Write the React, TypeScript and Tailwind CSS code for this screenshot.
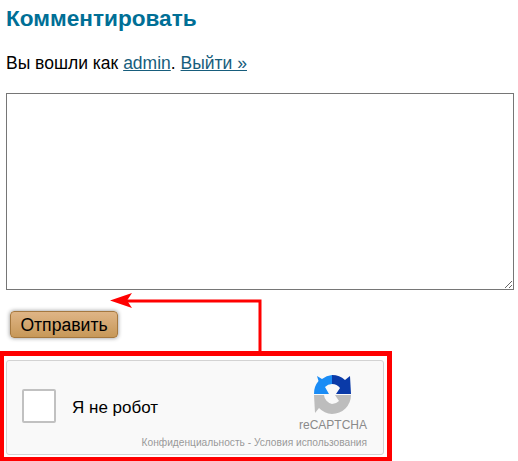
export default function App() {
  return (
    <div className="relative h-[461px] w-[518px] overflow-hidden bg-white font-['Liberation_Sans',Arial,sans-serif] text-black">
      <div className="px-[6px]">
        <h3 className="pt-[6px] text-[22.6px] leading-[26px] font-bold text-[#006f96]">Комментировать</h3>
        <p className="mt-[18px] text-[17.5px] leading-[26px]">
          Вы вошли как <a href="#" className="text-[#175d7c] underline">admin</a>.{" "}
          <a href="#" className="text-[#175d7c] underline">Выйти »</a>
        </p>
        <textarea className="mt-[17px] block h-[197px] w-[508px] border border-[#767676] bg-white" />
        <button className="mt-[21px] ml-[4px] block h-[27px] w-[108px] rounded-[4px] border border-[#a5783f] bg-gradient-to-b from-[#dfb586] to-[#c79858] text-[17.6px] leading-[24px] text-black shadow-[0_0_4px_rgba(0,0,0,0.45)]">
          Отправить
        </button>
      </div>

      <div className="mt-[13px] h-[110px] w-[392px] border-[5px] border-b-4 border-l-4 border-[#ff0000] pt-[4px] pl-[2px]">
        <div className="flex h-[95px] w-[378px] flex-col rounded-[3px] border border-[#d3d3d3] bg-[#f9f9f9]">
          <div className="flex h-[75px] items-start">
            <div className="mt-[28px] ml-[15px] h-[34px] w-[34px] rounded-[2px] border-2 border-[#c1c1c1] bg-white" />
            <span className="mt-[37px] ml-[16px] text-[17px] leading-[20px]">Я не робот</span>
            <div className="ml-auto flex w-[100px] flex-col items-center">
              <svg viewBox="0 0 48 48" className="mt-[9px] h-[48px] w-[48px]">
                <path d="M23 5 A19 19 0 0 1 36 10 L41 6 L42 24 L27 24 L31 18 A10 10 0 0 0 23 14 Z" fill="#0a3aa8" />
                <path d="M23 5 V14 A10 10 0 0 0 16 17 L20 24 L5 24 A19 19 0 0 1 9.5 11 L8 6 L13 9 A19 19 0 0 1 23 5 Z" fill="#1a8cf5" />
                <path d="M5 25 L15 25 A10 10 0 0 0 23 34 A10 10 0 0 0 30 31 L26 25 L42 25 A19 19 0 0 1 23 44 A19 19 0 0 1 10 38 L6 43 Z" fill="#bdbdbd" />
              </svg>
              <span className="mt-[-1px] text-[12px] leading-[16px] text-[#8a8a8a]">reCAPTCHA</span>
            </div>
          </div>
          <span className="pr-[16px] text-right text-[10.2px] leading-[14px] whitespace-nowrap text-[#9a9a9a]">
            Конфиденциальность - Условия использования
          </span>
        </div>
      </div>

      {/* red annotation arrow */}
      <svg className="absolute top-[290px] left-[105px]" width="160" height="62" viewBox="0 0 160 62">
        <path d="M155 61 V11 H20" fill="none" stroke="#ff0000" strokeWidth="3" />
        <path d="M5 10.5 L27 3 L22 10.5 L27 18 Z" fill="#ff0000" />
      </svg>
    </div>
  );
}
